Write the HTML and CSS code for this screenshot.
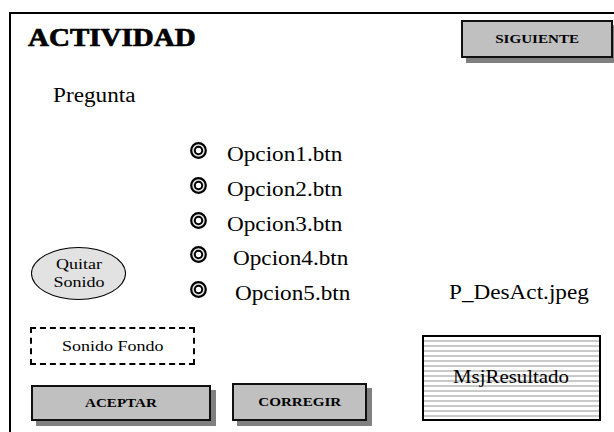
FILE: index.html
```html
<!DOCTYPE html>
<html lang="es">
<head>
<meta charset="utf-8">
<title>Actividad</title>
<link rel="stylesheet" href="styles.css">
</head>
<body>
<div class="frame">
  <div class="header">
    <h1 class="title"><span class="sx sx-left">ACTIVIDAD</span></h1>
    <div class="btn btn-next"><span class="sx">SIGUIENTE</span></div>
  </div>
  <div class="pregunta"><span class="sx sx-left">Pregunta</span></div>

  <div class="row-a">
    <div class="cell-left-a">
      <div class="ellipse"><span class="sx">Quitar<br>Sonido</span></div>
    </div>
    <div class="cell-options">
      <div class="opt">
        <svg class="radio" width="17" height="17" viewBox="0 0 17 17"><circle cx="8.5" cy="8.5" r="7.3" fill="#e4e4e4" stroke="#000" stroke-width="2.2"/><circle cx="8.5" cy="8.5" r="3.7" fill="#fff" stroke="#000" stroke-width="2"/></svg>
        <div class="opt-text"><span class="sx sx-left">Opcion1.btn</span></div>
      </div>
      <div class="opt">
        <svg class="radio" width="17" height="17" viewBox="0 0 17 17"><circle cx="8.5" cy="8.5" r="7.3" fill="#e4e4e4" stroke="#000" stroke-width="2.2"/><circle cx="8.5" cy="8.5" r="3.7" fill="#fff" stroke="#000" stroke-width="2"/></svg>
        <div class="opt-text"><span class="sx sx-left">Opcion2.btn</span></div>
      </div>
      <div class="opt opt-short">
        <svg class="radio" width="17" height="17" viewBox="0 0 17 17"><circle cx="8.5" cy="8.5" r="7.3" fill="#e4e4e4" stroke="#000" stroke-width="2.2"/><circle cx="8.5" cy="8.5" r="3.7" fill="#fff" stroke="#000" stroke-width="2"/></svg>
        <div class="opt-text"><span class="sx sx-left">Opcion3.btn</span></div>
      </div>
      <div class="opt">
        <svg class="radio" width="17" height="17" viewBox="0 0 17 17"><circle cx="8.5" cy="8.5" r="7.3" fill="#e4e4e4" stroke="#000" stroke-width="2.2"/><circle cx="8.5" cy="8.5" r="3.7" fill="#fff" stroke="#000" stroke-width="2"/></svg>
        <div class="opt-text opt-text-4"><span class="sx sx-left">Opcion4.btn</span></div>
      </div>
      <div class="opt">
        <svg class="radio" width="17" height="17" viewBox="0 0 17 17"><circle cx="8.5" cy="8.5" r="7.3" fill="#e4e4e4" stroke="#000" stroke-width="2.2"/><circle cx="8.5" cy="8.5" r="3.7" fill="#fff" stroke="#000" stroke-width="2"/></svg>
        <div class="opt-text opt-text-5"><span class="sx sx-left">Opcion5.btn</span></div>
      </div>
    </div>
    <div class="cell-right-a">
      <div class="pic-name"><span class="sx sx-left">P_DesAct.jpeg</span></div>
    </div>
  </div>

  <div class="row-b">
    <div class="cell-left-b">
      <div class="dashed"><span class="sx">Sonido Fondo</span></div>
      <div class="btn btn-accept"><span class="sx">ACEPTAR</span></div>
    </div>
    <div class="cell-mid-b">
      <div class="btn btn-fix"><span class="sx">CORREGIR</span></div>
    </div>
    <div class="cell-right-b">
      <div class="result"><span class="sx">MsjResultado</span></div>
    </div>
  </div>
</div>
</body>
</html>
```

FILE: styles.css
```css
html, body {
  margin: 0;
  padding: 0;
  background: #fff;
  overflow: hidden;
}
body {
  width: 614px;
  height: 432px;
  font-family: "Liberation Serif", "DejaVu Serif", serif;
  color: #000;
}
.frame, .frame div, .frame span, .frame h1 {
  font-family: "Liberation Serif", "DejaVu Serif", serif;
}
.sx {
  display: inline-block;
  transform: scaleX(1.16);
  transform-origin: center;
  white-space: nowrap;
}
.sx-left { transform-origin: left center; }

.frame {
  margin: 12px 0 0 9px;
  border-top: 2px solid #000;
  border-left: 2px solid #000;
  height: 420px;
  box-sizing: border-box;
}

.header {
  display: flex;
  align-items: flex-start;
}
.title {
  margin: 10.6px 0 0 17px;
  font-size: 25px;
  line-height: 25px;
  font-weight: 900;
  -webkit-text-stroke: 0.7px #000;
}
.btn {
  box-sizing: border-box;
  background: #c0c0c0;
  border: 2px solid #111;
  box-shadow: 5px 5px 0 #808080;
  display: flex;
  align-items: center;
  justify-content: center;
  font-weight: bold;
  font-size: 13px;
}
.btn-next {
  margin: 6px 1px 0 auto;
  width: 152px;
  height: 38px;
}

.pregunta {
  margin: 24.5px 0 0 42px;
  font-size: 20px;
  line-height: 24px;
  height: 24px;
}

.row-a {
  display: flex;
}
.cell-left-a {
  width: 179px;
  padding-left: 20px;
  box-sizing: border-box;
}
.ellipse {
  margin-top: 140px;
  width: 95px;
  height: 53px;
  box-sizing: border-box;
  border: 1.5px solid #000;
  border-radius: 50%;
  background: #e2e2e2;
  display: flex;
  align-items: center;
  justify-content: center;
  text-align: center;
  font-size: 15.5px;
  line-height: 18px;
}
.cell-options {
  width: 259px;
  padding-top: 34px;
  box-sizing: border-box;
}
.opt {
  display: flex;
  align-items: flex-start;
  height: 35px;
}
.opt-short { height: 34px; }
.radio {
  width: 17px;
  height: 17px;
  margin-top: 1px;
  flex: none;
}
.opt-text {
  margin: 5px 0 0 20px;
  height: 16px;
  line-height: 16px;
  font-size: 20px;
}
.opt-text-4 { margin-left: 26px; }
.opt-text-5 { margin-left: 28px; }

.cell-right-a {
  flex: 1;
}
.pic-name {
  margin-top: 175.5px;
  font-size: 20px;
  line-height: 20px;
}

.row-b {
  display: flex;
}
.cell-left-b {
  width: 221px;
  padding-left: 19px;
  box-sizing: border-box;
}
.dashed {
  margin-top: 12px;
  width: 165px;
  height: 38px;
  box-sizing: border-box;
  border: 2px dashed #000;
  display: flex;
  align-items: center;
  justify-content: center;
  font-size: 15.5px;
}
.btn-accept {
  margin: 20px 0 0 1px;
  width: 180px;
  height: 36px;
}
.cell-mid-b {
  width: 190px;
}
.btn-fix {
  margin-top: 68px;
  width: 135px;
  height: 38px;
}
.cell-right-b {
  flex: 1;
}
.result {
  margin-top: 20px;
  width: 179px;
  height: 86px;
  box-sizing: border-box;
  border: 2px solid #000;
  background: repeating-linear-gradient(to bottom, #fff 0, #fff 3px, #c9c9c9 3px, #c9c9c9 5px);
  display: flex;
  align-items: center;
  justify-content: center;
  font-size: 18px;
}
```
